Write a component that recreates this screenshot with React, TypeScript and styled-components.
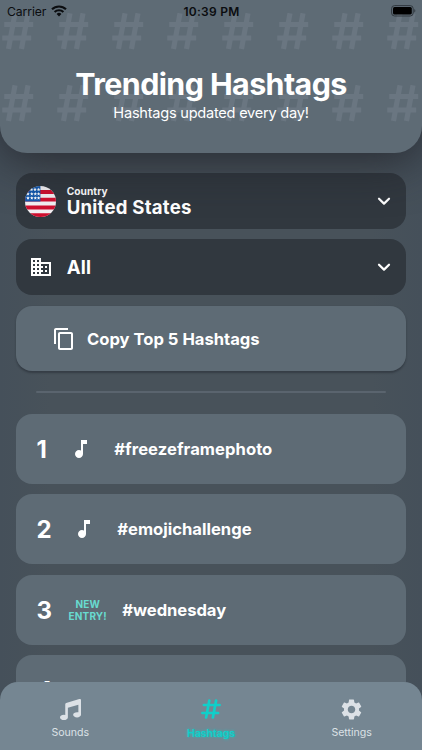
import React from "react";
import styled, { createGlobalStyle } from "styled-components";
import { MdBusiness, MdContentCopy, MdMusicNote, MdSettings } from "react-icons/md";
import { FaMusic } from "react-icons/fa";

const GlobalStyle = createGlobalStyle`
  *, *::before, *::after { box-sizing: border-box; }
  body {
    margin: 0;
    overflow: hidden;
    background: #48525b;
    font-family: Inter, "Liberation Sans", sans-serif;
    color: #fff;
  }
  svg { display: block; flex: none; }
`;

const Screen = styled.div`
  position: relative;
  width: 422px;
  height: 750px;
  overflow: hidden;
  background: linear-gradient(90deg, #45505a, #48525a 12%, #48525a 88%, #45505a);
`;

const Header = styled.header`
  position: relative;
  z-index: 2;
  height: 153px;
  border-radius: 0 0 27px 27px;
  background: #5e6b75;
  box-shadow: 0 8px 48px rgba(28, 30, 37, 0.78);
`;

const HashPattern = styled.div`
  position: absolute;
  inset: 0;
  overflow: hidden;
  border-radius: inherit;
  display: grid;
  grid-template-columns: repeat(8, 54.9px);
  grid-template-rows: repeat(2, 71.7px);
  padding: 13px 0 0 2.4px;
  color: #6a7681;
`;

const StatusBar = styled.div`
  position: relative;
  display: grid;
  grid-template-columns: 1fr auto 1fr;
  align-items: center;
  height: 22px;
  padding: 0 6px 0 7px;
  color: #0b0d10;
`;

const Carrier = styled.div`
  display: flex;
  align-items: center;
  gap: 5px;
  font-size: 12.2px;
  letter-spacing: -0.1px;
`;

const Clock = styled.div`
  font-size: 12px;
  font-weight: 600;
  letter-spacing: 0.28px;
`;

const BatterySlot = styled.div`
  display: flex;
  justify-content: flex-end;
`;

const Title = styled.h1`
  position: relative;
  margin: 44px 0 0;
  text-align: center;
  font-size: 30.4px;
  line-height: 36px;
  font-weight: 700;
  letter-spacing: -0.58px;
  white-space: nowrap;
`;

const Subtitle = styled.p`
  position: relative;
  margin: 1.5px 0 0;
  text-align: center;
  font-size: 14.6px;
  line-height: 19px;
  letter-spacing: -0.25px;
`;

const Content = styled.main`
  display: flex;
  flex-direction: column;
  padding: 20.3px 15.7px 0;
`;

const Select = styled.button`
  display: flex;
  align-items: center;
  height: 56px;
  margin: 0 0 10.2px;
  padding: 0 10.3px 0 9px;
  border: 0;
  border-radius: 16px;
  background: #31383f;
  color: #fff;
  font-family: inherit;
  text-align: left;
`;

const SelectIcon = styled.span`
  display: flex;
  justify-content: center;
  width: 32px;
  margin-right: 10px;
`;

const SelectText = styled.span`
  flex: 1;
  display: flex;
  flex-direction: column;
`;

const SelectLabel = styled.span`
  font-size: 10.2px;
  font-weight: 700;
  line-height: 12px;
  letter-spacing: 0.05px;
`;

const SelectValue = styled.span`
  font-size: 18.6px;
  font-weight: 700;
  line-height: 21.6px;
  letter-spacing: 0.22px;
`;

const CopyButton = styled.button`
  display: flex;
  align-items: center;
  gap: 10.8px;
  height: 65px;
  padding: 1px 0 0 36.5px;
  border: 0;
  border-radius: 16px;
  background: #5e6b75;
  box-shadow: 0 1.5px 2px rgba(25, 31, 38, 0.4);
  color: #fff;
  font: 700 16.6px/22px Inter, "Liberation Sans", sans-serif;
`;

const Divider = styled.hr`
  width: 350px;
  height: 2px;
  margin: 20.3px auto 21px;
  border: 0;
  border-radius: 1px;
  background: #5a646e;
`;

const List = styled.ol`
  display: flex;
  flex-direction: column;
  gap: 10.3px;
  margin: 0;
  padding: 0;
  list-style: none;
`;

const Row = styled.li`
  display: flex;
  align-items: center;
  height: 70.1px;
  padding-left: 20.8px;
  border-radius: 16px;
  background: #5e6b75;
`;

const Rank = styled.span<{ $width: number }>`
  width: ${(p) => p.$width}px;
  margin-right: 16px;
  padding-top: 1.5px;
  font-size: 24px;
  font-weight: 700;
  line-height: 30px;
  white-space: nowrap;
`;

const Mark = styled.span<{ $width: number }>`
  display: flex;
  justify-content: center;
  width: ${(p) => p.$width}px;
  margin-right: 15.6px;
  color: #fff;
`;

const NewEntry = styled.span`
  color: #68dbd0;
  font-size: 10px;
  font-weight: 700;
  line-height: 12px;
  letter-spacing: 0.15px;
  text-align: center;
`;

const Tag = styled.span<{ $spacing: number }>`
  font-size: 16.6px;
  font-weight: 700;
  letter-spacing: ${(p) => p.$spacing}px;
`;

const TabBar = styled.nav`
  position: absolute;
  z-index: 3;
  inset: auto 0 0 0;
  display: grid;
  grid-template-columns: repeat(3, 1fr);
  height: 67.6px;
  border-radius: 18px 18px 0 0;
  background: #758692;
`;

const Tab = styled.div<{ $active?: boolean }>`
  display: flex;
  flex-direction: column;
  align-items: center;
  padding-top: 15px;
  color: ${(p) => (p.$active ? "#10cfc9" : "#dce1e6")};
`;

const TabIcon = styled.span`
  display: flex;
  align-items: center;
  justify-content: center;
  height: 24px;
`;

const TabLabel = styled.span<{ $active?: boolean }>`
  margin-top: ${(p) => (p.$active ? 6 : 5)}px;
  font-size: 10.6px;
  line-height: 14px;
  font-weight: ${(p) => (p.$active ? 600 : 400)};
  letter-spacing: ${(p) => (p.$active ? -0.1 : 0)}px;
  text-shadow: ${(p) => (p.$active ? "0 0 3px #10cfc9" : "none")};
`;

const HashMark = () => (
  <svg width="32" height="37" viewBox="0 0 32 37" fill="none" stroke="currentColor" strokeWidth="5.2">
    <path d="M13 .3 6.5 36M26 .3 19.5 36M2.2 11.5H31.2M.2 25H29.2" />
  </svg>
);

const TabHash = () => (
  <svg width="20" height="20" viewBox="0 0 20 20" fill="none" stroke="currentColor" strokeWidth="2.7" strokeLinecap="round">
    <path d="M8.3 1.5 5.1 18.5M15.1 1.5 11.9 18.5M2.9 6H18.6M1.4 14H17.1" />
  </svg>
);

const Wifi = () => (
  <svg width="16" height="12" viewBox="0 0 16 12" fill="none" stroke="currentColor" strokeWidth="2.1">
    <path d="M1 4.3a10 10 0 0 1 14 0M3.6 7a6.3 6.3 0 0 1 8.8 0" />
    <path d="M8 11.4 5.6 9a3.4 3.4 0 0 1 4.8 0z" fill="currentColor" stroke="none" />
  </svg>
);

const Battery = () => (
  <svg width="25" height="12" viewBox="0 0 25 12">
    <rect x=".6" y=".6" width="21.6" height="10.4" rx="3" fill="none" stroke="#30383f" />
    <rect x="2" y="2" width="18.8" height="7.6" rx="1.5" fill="#000" />
    <path d="M23.3 4.1c1.4.5 1.4 2.9 0 3.4z" fill="#30383f" />
  </svg>
);

const stars = [
  [6.5, 3.5], [10, 3.5], [13.6, 3.5],
  [3, 7.8], [6.8, 7.8], [10.3, 7.8], [13.6, 7.8],
  [3, 12], [6.8, 12], [10.3, 12], [13.6, 12],
];

const Flag = () => (
  <svg width="31" height="31" viewBox="0 0 31 31">
    <clipPath id="flag-circle"><circle cx="15.5" cy="15.5" r="15.5" /></clipPath>
    <g clipPath="url(#flag-circle)">
      <path fill="#f4f1f4" d="M0 0h31v31H0z" />
      <path fill="#cf0f2f" d="M0 4h31v3.9H0zM0 11.7h31v3.9H0zM0 19.5h31v3.9H0zM0 27.2h31v3.9H0z" />
      <path fill="#1459ad" d="M0 0h15.4v15.4H0z" />
      {stars.map(([x, y]) => (
        <path
          key={`${x}-${y}`}
          fill="#fff"
          transform={`translate(${x} ${y})`}
          d="m0-1.8.5 1.15 1.3.1-1 .85.3 1.3-1.1-.7-1.1.7.3-1.3-1-.85 1.3-.1z"
        />
      ))}
    </g>
  </svg>
);

const Chevron = () => (
  <svg width="24" height="24" viewBox="0 0 24 24" fill="none" stroke="currentColor" strokeWidth="2.2" strokeLinecap="round" strokeLinejoin="round">
    <path d="m7 9.7 5 4.9 5-4.9" />
  </svg>
);

const rows = [
  { rankWidth: 11.2, markWidth: 35, tag: "#freezeframephoto", isNew: false, spacing: 0.06 },
  { rankWidth: 14.2, markWidth: 35, tag: "#emojichallenge", isNew: false, spacing: 0 },
  { rankWidth: 16.2, markWidth: 38, tag: "#wednesday", isNew: true, spacing: -0.05 },
  { rankWidth: 17, markWidth: 35, tag: "", isNew: false, spacing: 0 },
];

export default function App() {
  return (
    <>
      <GlobalStyle />
      <Screen>
        <Header>
          <HashPattern>
            {Array.from({ length: 16 }, (_, i) => <HashMark key={i} />)}
          </HashPattern>
          <StatusBar>
            <Carrier>Carrier <Wifi /></Carrier>
            <Clock>10:39 PM</Clock>
            <BatterySlot><Battery /></BatterySlot>
          </StatusBar>
          <Title>Trending Hashtags</Title>
          <Subtitle>Hashtags updated every day!</Subtitle>
        </Header>
        <Content>
          <Select>
            <SelectIcon><Flag /></SelectIcon>
            <SelectText>
              <SelectLabel>Country</SelectLabel>
              <SelectValue>United States</SelectValue>
            </SelectText>
            <Chevron />
          </Select>
          <Select>
            <SelectIcon><MdBusiness size={24} /></SelectIcon>
            <SelectText><SelectValue>All</SelectValue></SelectText>
            <Chevron />
          </Select>
          <CopyButton><MdContentCopy size={24} />Copy Top 5 Hashtags</CopyButton>
          <Divider />
          <List>
            {rows.map((row, i) => (
              <Row key={i}>
                <Rank $width={row.rankWidth}>{i + 1}</Rank>
                <Mark $width={row.markWidth}>
                  {row.isNew ? <NewEntry>NEW<br />ENTRY!</NewEntry> : row.tag && <MdMusicNote size={24} />}
                </Mark>
                <Tag $spacing={row.spacing}>{row.tag}</Tag>
              </Row>
            ))}
          </List>
        </Content>
        <TabBar>
          <Tab><TabIcon><FaMusic size={21} /></TabIcon><TabLabel>Sounds</TabLabel></Tab>
          <Tab $active><TabIcon><TabHash /></TabIcon><TabLabel $active>Hashtags</TabLabel></Tab>
          <Tab><TabIcon><MdSettings size={25} /></TabIcon><TabLabel>Settings</TabLabel></Tab>
        </TabBar>
      </Screen>
    </>
  );
}
